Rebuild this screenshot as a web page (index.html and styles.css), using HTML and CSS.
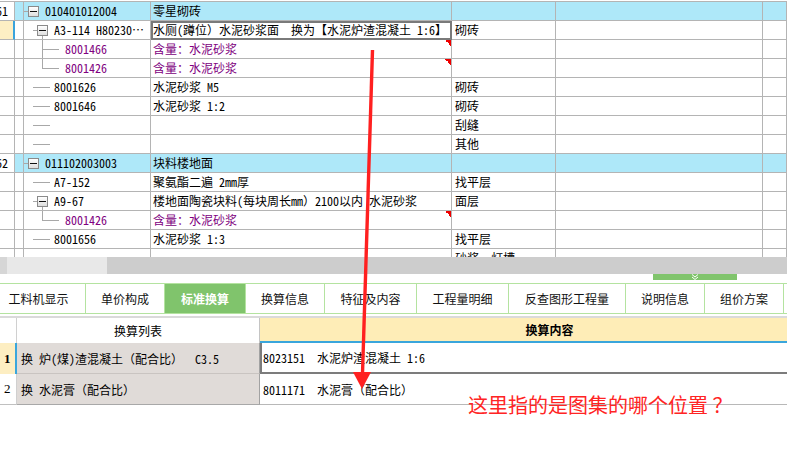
FILE: index.html
```html
<!DOCTYPE html>
<html lang="zh-CN">
<head>
<meta charset="utf-8">
<title>标准换算</title>
<link rel="stylesheet" href="styles.css">
</head>
<body>
<div class="app">
  <div class="grid">
    <div class="row blue">
      <div class="c ca">61</div><div class="c cb"></div>
      <div class="c cc"><span class="h4"></span><span class="box"><i></i></span><span class="tx">010401012004</span></div>
      <div class="c cd">零星砌砖</div><div class="c ce"></div><div class="c cf"></div><div class="c cg"></div>
    </div>
    <div class="row">
      <div class="c ca sel"></div><div class="c cb"></div>
      <div class="c cc"><span class="sp9"></span><span class="h4"></span><span class="togw"><span class="box"><i></i></span></span><span class="tx">A3-114 H80230…</span></div>
      <div class="c cd cur">水厕(蹲位）水泥砂浆面  换为【水泥炉渣混凝土 1:6】</div><div class="c ce">砌砖</div><div class="c cf"></div><div class="c cg"></div>
    </div>
    <div class="row pur">
      <div class="c ca"></div><div class="c cb"></div>
      <div class="c cc"><span class="sp18"></span><span class="elt"></span><span class="tx">8001466</span></div>
      <div class="c cd mark">含量：水泥砂浆</div><div class="c ce"></div><div class="c cf"></div><div class="c cg"></div>
    </div>
    <div class="row pur">
      <div class="c ca"></div><div class="c cb"></div>
      <div class="c cc"><span class="sp18"></span><span class="ell"></span><span class="tx">8001426</span></div>
      <div class="c cd mark">含量：水泥砂浆</div><div class="c ce"></div><div class="c cf"></div><div class="c cg"></div>
    </div>
    <div class="row">
      <div class="c ca"></div><div class="c cb"></div>
      <div class="c cc"><span class="sp9"></span><span class="h17"></span><span class="tx">8001626</span></div>
      <div class="c cd">水泥砂浆 M5</div><div class="c ce">砌砖</div><div class="c cf"></div><div class="c cg"></div>
    </div>
    <div class="row">
      <div class="c ca"></div><div class="c cb"></div>
      <div class="c cc"><span class="sp9"></span><span class="h17"></span><span class="tx">8001646</span></div>
      <div class="c cd">水泥砂浆 1:2</div><div class="c ce">砌砖</div><div class="c cf"></div><div class="c cg"></div>
    </div>
    <div class="row">
      <div class="c ca"></div><div class="c cb"></div>
      <div class="c cc"><span class="sp9"></span><span class="h17"></span></div>
      <div class="c cd"></div><div class="c ce">刮缝</div><div class="c cf"></div><div class="c cg"></div>
    </div>
    <div class="row">
      <div class="c ca"></div><div class="c cb"></div>
      <div class="c cc"><span class="sp9"></span><span class="h17"></span></div>
      <div class="c cd"></div><div class="c ce">其他</div><div class="c cf"></div><div class="c cg"></div>
    </div>
    <div class="row blue">
      <div class="c ca">62</div><div class="c cb"></div>
      <div class="c cc"><span class="h4"></span><span class="box"><i></i></span><span class="tx">011102003003</span></div>
      <div class="c cd">块料楼地面</div><div class="c ce"></div><div class="c cf"></div><div class="c cg"></div>
    </div>
    <div class="row">
      <div class="c ca"></div><div class="c cb"></div>
      <div class="c cc"><span class="sp9"></span><span class="h17"></span><span class="tx">A7-152</span></div>
      <div class="c cd">聚氨酯二遍 2mm厚</div><div class="c ce">找平层</div><div class="c cf"></div><div class="c cg"></div>
    </div>
    <div class="row">
      <div class="c ca"></div><div class="c cb"></div>
      <div class="c cc"><span class="sp9"></span><span class="h4"></span><span class="togw"><span class="box"><i></i></span></span><span class="tx">A9-67</span></div>
      <div class="c cd">楼地面陶瓷块料(每块周长mm）2100以内 水泥砂浆</div><div class="c ce">面层</div><div class="c cf"></div><div class="c cg"></div>
    </div>
    <div class="row pur">
      <div class="c ca"></div><div class="c cb"></div>
      <div class="c cc"><span class="sp18"></span><span class="ell"></span><span class="tx">8001426</span></div>
      <div class="c cd mark">含量：水泥砂浆</div><div class="c ce"></div><div class="c cf"></div><div class="c cg"></div>
    </div>
    <div class="row">
      <div class="c ca"></div><div class="c cb"></div>
      <div class="c cc"><span class="sp9"></span><span class="h17"></span><span class="tx">8001656</span></div>
      <div class="c cd">水泥砂浆 1:3</div><div class="c ce">找平层</div><div class="c cf"></div><div class="c cg"></div>
    </div>
    <div class="row">
      <div class="c ca"></div><div class="c cb"></div>
      <div class="c cc"><span class="sp9"></span><span class="h17"></span></div>
      <div class="c cd"></div><div class="c ce">砂浆、灯槽</div><div class="c cf"></div><div class="c cg"></div>
    </div>
  </div>

  <div class="hs"><div class="hs-btn"></div><div class="hs-track"></div><div class="hs-thumb"></div></div>

  <div class="split"><div class="grip"><svg width="10" height="6" viewBox="0 0 10 6"><path d="M2 0.5 L5 3 L8 0.5 M2 3 L5 5.5 L8 3" fill="none" stroke="#fff" stroke-width="1"/></svg></div></div>

  <div class="tabs">
    <div class="tab t1">工料机显示</div>
    <div class="tab">单价构成</div>
    <div class="tab t3 on">标准换算</div>
    <div class="tab">换算信息</div>
    <div class="tab t5">特征及内容</div>
    <div class="tab t5">工程量明细</div>
    <div class="tab t7">反查图形工程量</div>
    <div class="tab">说明信息</div>
    <div class="tab">组价方案</div>
  </div>
  <div class="sep"></div>

  <div class="bt">
    <div class="b0 hd"></div>
    <div class="b1 hd">换算列表</div>
    <div class="b2 hd hd2">换算内容</div>

    <div class="b0 n1">1</div>
    <div class="b1 l">换 炉(煤)渣混凝土（配合比）  C3.5</div>
    <div class="b2 r1">8023151  水泥炉渣混凝土 1:6</div>

    <div class="b0 n2">2</div>
    <div class="b1 l l2">换 水泥膏（配合比）</div>
    <div class="b2 r2">8011171  水泥膏（配合比）</div>
  </div>

  <svg class="arrow" width="787" height="459" viewBox="0 0 787 459">
    <line x1="372.5" y1="50" x2="362.5" y2="374" stroke="#ff2020" stroke-width="3.4"/>
    <polygon points="353,372 371,372 362,389" fill="#ff2020"/>
  </svg>
  <div class="note">这里指的是图集的哪个位置 ？</div>
</div>
</body>
</html>
```

FILE: styles.css
```css
* { box-sizing: border-box; }

body {
  margin: 0;
  background: #fff;
  color: #000;
  font-family: "Noto Sans Mono CJK SC", "Noto Sans CJK SC", "Liberation Mono", monospace;
  font-size: 12px;
}

.app {
  position: relative;
  width: 787px;
  height: 459px;
  overflow: hidden;
}

/* ---------- top tree grid ---------- */
.grid {
  margin-top: 1px;
  border-top: 1px solid #b4b4b4;
  height: 256px;
  overflow: hidden;
}

.row {
  display: grid;
  grid-template-columns: 15px 9px 127px 301px 104px 207px 24px;
  height: 19px;
}

.c {
  display: flex;
  align-items: center;
  border-right: 1px solid #b4b4b4;
  border-bottom: 1px solid #b4b4b4;
  white-space: pre;
  overflow: hidden;
  line-height: 18px;
}

.row.blue .c:not(.ca) { background: #aee8f9; }

.ca {
  justify-content: flex-end;
  padding-right: 6px;
}
.ca.sel {
  background: #fdefc4;
  border-right: 2px solid #3aa3dc;
}

.cd { padding-left: 2px; }
.ce { padding-left: 3px; }

.cd.cur {
  outline: 2px solid #7a7a7a;
  outline-offset: -2px;
}

.cd.mark {
  background: linear-gradient(to bottom left, #ee0000 50%, transparent 50%) right top / 6px 6px no-repeat;
}

.pur .tx, .pur .cd { color: #800080; }

/* tree decorations */
.h4, .h17 { flex: none; height: 1px; background: #a8a8a8; }
.h4 { width: 4px; }
.h17 { width: 17px; }
.sp9 { flex: none; width: 9px; }
.sp18 { flex: none; width: 18px; }

.box {
  flex: none;
  width: 11px;
  height: 11px;
  border: 1px solid #8a8a8a;
  background: linear-gradient(#ffffff, #dedede);
  display: flex;
  align-items: center;
  justify-content: center;
}
.box i {
  display: block;
  width: 7px;
  height: 1px;
  background: #111;
}

.togw {
  flex: none;
  align-self: stretch;
  width: 11px;
  display: flex;
  align-items: center;
  background: linear-gradient(#a8a8a8, #a8a8a8) 5px 100% / 1px 50% no-repeat;
}

.elt, .ell {
  flex: none;
  align-self: stretch;
  width: 17px;
}
.elt {
  background:
    linear-gradient(#a8a8a8, #a8a8a8) 0 0 / 1px 100% no-repeat,
    linear-gradient(#a8a8a8, #a8a8a8) 0 50% / 100% 1px no-repeat;
}
.ell {
  background:
    linear-gradient(#a8a8a8, #a8a8a8) 0 0 / 1px 50% no-repeat,
    linear-gradient(#a8a8a8, #a8a8a8) 0 50% / 100% 1px no-repeat;
}

.tx { margin-left: 6px; }
.h17 + .tx { margin-left: 4px; }

/* ---------- horizontal scrollbar ---------- */
.hs {
  display: flex;
  height: 17px;
}
.hs-btn { width: 7px; background: #d6d6d6; }
.hs-track { width: 100px; background: #e8e8e8; }
.hs-thumb { flex: 1; background: #cdcdcd; }

/* ---------- splitter ---------- */
.split {
  height: 9px;
  display: flex;
}
.grip {
  margin-left: 653px;
  width: 84px;
  height: 6px;
  background: #80c46c;
  display: flex;
  justify-content: center;
  align-items: center;
}
.grip svg { display: block; }

/* ---------- tabs ---------- */
.tabs {
  display: flex;
  height: 31px;
  border-top: 1px solid #b4e3a0;
  border-bottom: 1px solid #b4e3a0;
  font-family: "Noto Sans CJK SC", sans-serif;
  font-size: 12px;
}
.tab {
  flex: none;
  width: 79px;
  border-right: 1px solid #b4e3a0;
  display: flex;
  align-items: center;
  justify-content: center;
  color: #111;
}
.tab.t1 { width: 86px; padding-right: 8px; }
.tab.t3 { width: 81px; }
.tab.t5 { width: 92px; }
.tab.t7 { width: 117px; }
.tab.on {
  background: #80c46c;
  color: #fff;
  font-weight: bold;
}

.sep {
  height: 4px;
  border-bottom: 2px solid #dadada;
}

/* ---------- bottom conversion table ---------- */
.bt {
  display: grid;
  grid-template-columns: 17px 243px 527px;
  grid-template-rows: 25px 31px 31px;
}
.bt > div {
  display: flex;
  align-items: center;
  white-space: pre;
}
.hd { background: #fff; }
.b0.hd { border-right: 1px solid #d0d0d0; }
.b1.hd {
  justify-content: center;
  border-right: 1px solid #c4c4c4;
  font-family: "Noto Sans CJK SC", sans-serif;
}
.hd2 {
  background: #feedb7;
  border-bottom: 2px solid #3aa6dc;
  justify-content: center;
  padding-left: 52px;
  font-weight: bold;
  font-family: "Noto Sans CJK SC", sans-serif;
}

.n1 {
  background: #fdeec2;
  border-right: 2px solid #3aa6dc;
  padding-left: 4px;
  font-family: "Liberation Serif", serif;
  font-weight: bold;
  font-size: 13px;
}
.n2 {
  background: #fff;
  border-right: 1px solid #d0d0d0;
  border-bottom: 1px solid #c0c0c0;
  padding-left: 4px;
  font-family: "Liberation Serif", serif;
  font-size: 13px;
}

.l {
  background: #e0dbd8;
  border-right: 1px solid #a2a2a2;
  border-bottom: 1px solid #c9c4c1;
  padding-left: 4px;
}
.l2 { border-bottom-color: #a8a8a8; }

.r1 {
  border-left: 2px solid #7c7c7c;
  border-bottom: 2px solid #7c7c7c;
  padding-left: 1px;
}
.r2 {
  border-bottom: 1px solid #b8b8b8;
  padding-left: 3px;
}

/* ---------- annotation overlays ---------- */
.arrow {
  position: absolute;
  left: 0;
  top: 0;
  pointer-events: none;
}
.note {
  position: absolute;
  left: 468px;
  top: 393px;
  font-family: "Noto Sans CJK SC", sans-serif;
  font-size: 20px;
  line-height: 24px;
  color: #ff2424;
  white-space: nowrap;
}
```
